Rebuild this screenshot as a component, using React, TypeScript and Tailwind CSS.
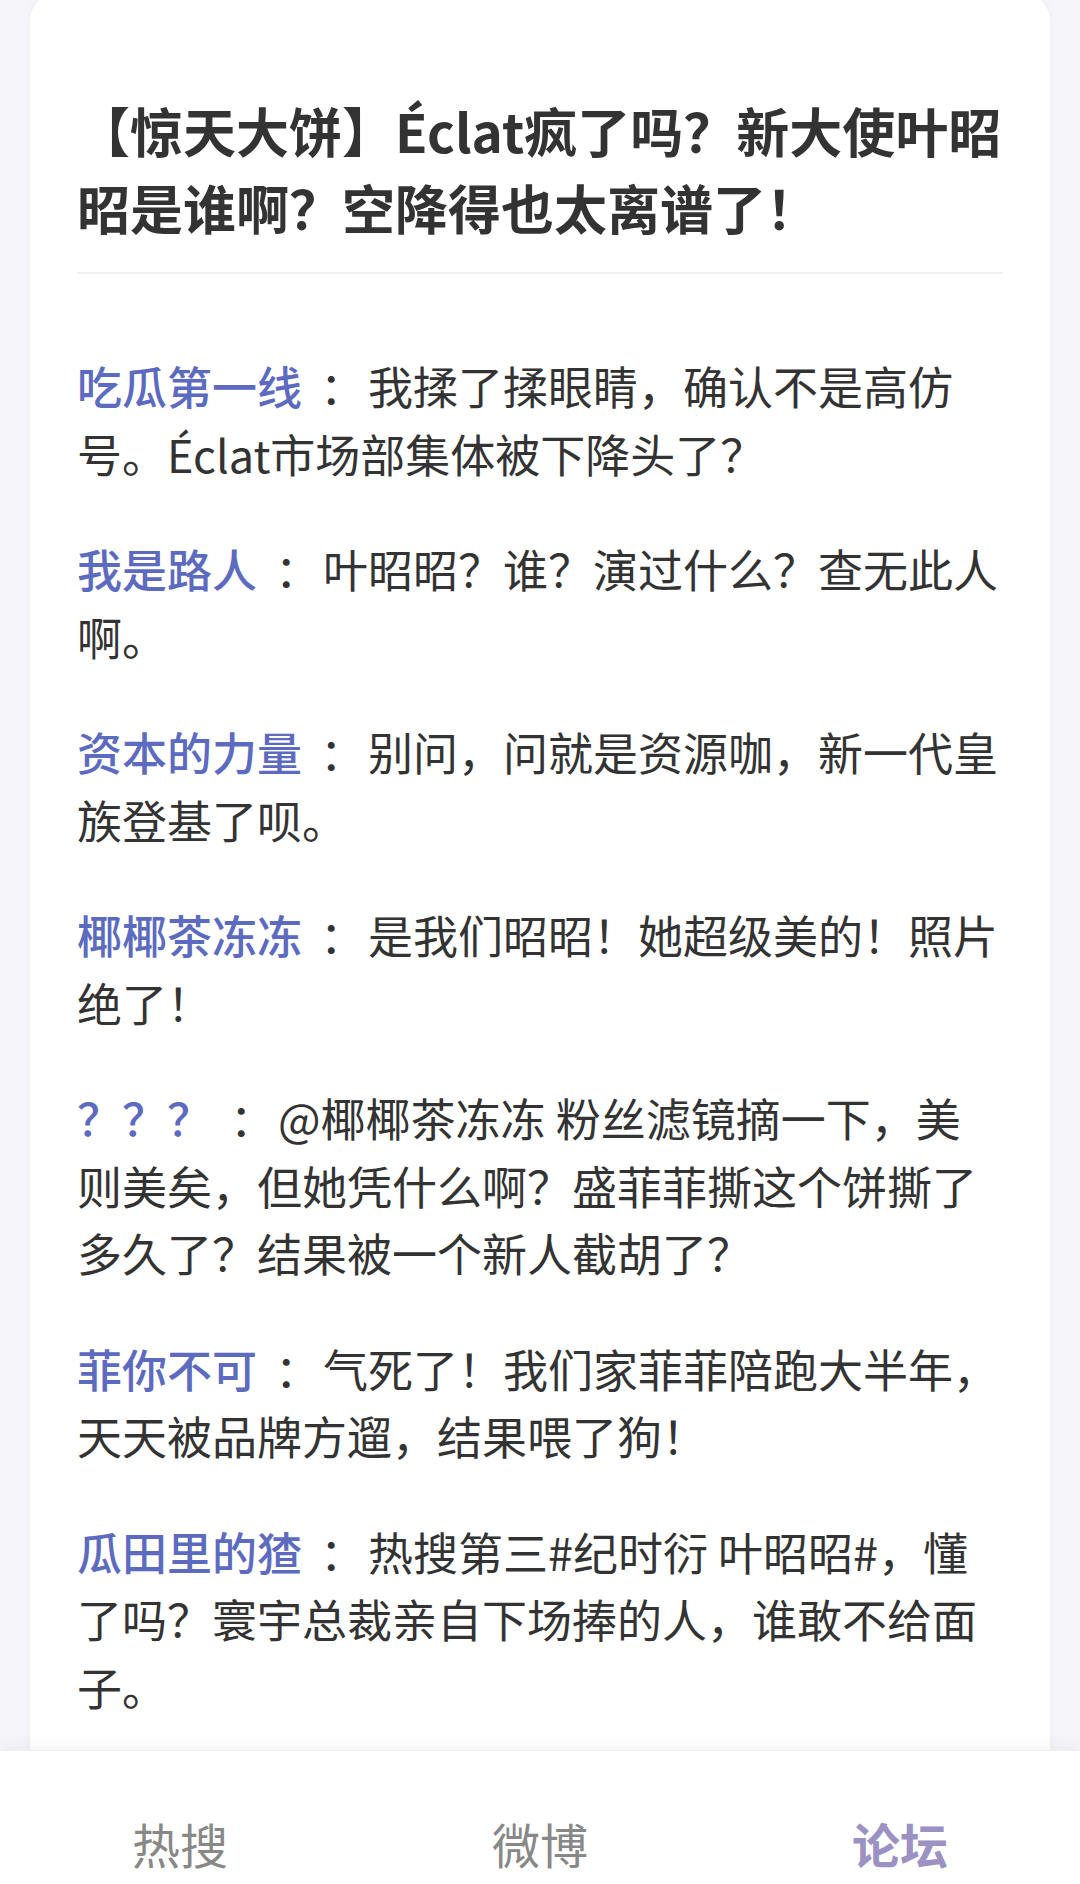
import React from 'react';

interface Comment {
  name: string;
  text: string;
}

const comments: Comment[] = [
  { name: '吃瓜第一线', text: '我揉了揉眼睛，确认不是高仿号。Éclat市场部集体被下降头了？' },
  { name: '我是路人', text: '叶昭昭？谁？演过什么？查无此人啊。' },
  { name: '资本的力量', text: '别问，问就是资源咖，新一代皇族登基了呗。' },
  { name: '椰椰茶冻冻', text: '是我们昭昭！她超级美的！照片绝了！' },
  { name: '？？？', text: '@椰椰茶冻冻 粉丝滤镜摘一下，美则美矣，但她凭什么啊？盛菲菲撕这个饼撕了多久了？结果被一个新人截胡了？' },
  { name: '菲你不可', text: '气死了！我们家菲菲陪跑大半年，天天被品牌方遛，结果喂了狗！' },
  { name: '瓜田里的猹', text: '热搜第三#纪时衍 叶昭昭#，懂了吗？寰宇总裁亲自下场捧的人，谁敢不给面子。' },
];

const tabs = [
  { label: '热搜', active: false },
  { label: '微博', active: false },
  { label: '论坛', active: true },
];

export default function App() {
  return (
    <div className="h-[1884px] w-full flex flex-col overflow-hidden bg-[#f6f6fa] font-['Noto_Sans_CJK_SC','Noto_Sans',sans-serif]">
      {/* Thread */}
      <main className="flex-1 overflow-hidden">
        <div className="mx-[30px] -mt-[8px] rounded-[30px] bg-white px-[47px] pt-[100px] pb-[60px] shadow-[0_0_14px_rgba(0,0,0,0.03)]">
          <h1 className="text-[53px] leading-[77px] font-bold text-[#333] pb-[26px] border-b-2 border-[#f0f0f0]">
            【惊天大饼】Éclat疯了吗？新大使叶昭昭是谁啊？空降得也太离谱了！
          </h1>

          <div className="mt-[78px] flex flex-col gap-[48px]">
            {comments.map((c, i) => (
              <p key={i} className="text-[45px] leading-[1.5] text-[#333]">
                <span className="font-medium text-[#5c6bc0]">{c.name}</span>
                <span className="inline-block w-[66px] pl-[18px]">：</span>
                {c.text}
              </p>
            ))}
          </div>
        </div>
      </main>

      {/* Bottom tabs */}
      <nav className="h-[134px] shrink-0 bg-white border-t border-[#eeeeee] shadow-[0_-6px_14px_rgba(0,0,0,0.04)] grid grid-cols-3">
        {tabs.map((t) => (
          <div key={t.label} className="flex justify-center pt-[68px]">
            <span
              className={
                t.active
                  ? 'text-[48px] leading-[48px] font-bold text-[#9b91c3]'
                  : 'text-[48px] leading-[48px] text-[#888888]'
              }
            >
              {t.label}
            </span>
          </div>
        ))}
      </nav>
    </div>
  );
}
